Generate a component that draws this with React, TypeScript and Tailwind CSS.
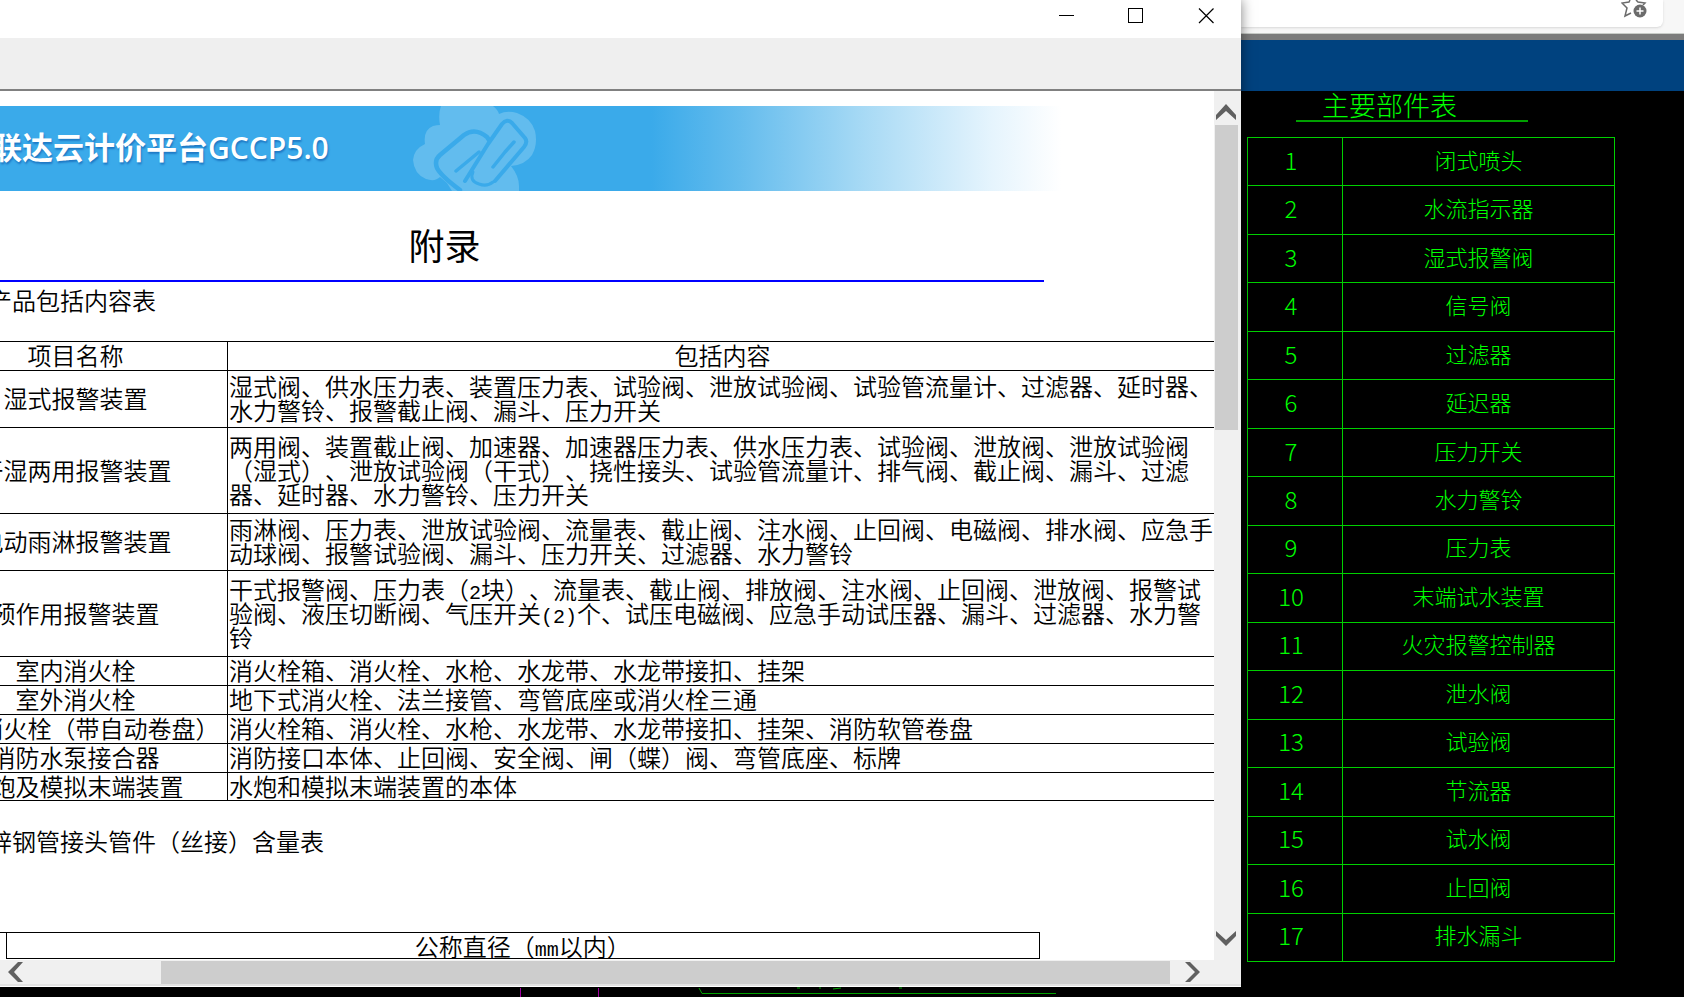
import { ReactNode } from 'react';

const deviceRows = [
  { name: '湿式报警装置', height: 'h-[57px]', lines: ['湿式阀、供水压力表、装置压力表、试验阀、泄放试验阀、试验管流量计、过滤器、延时器、', '水力警铃、报警截止阀、漏斗、压力开关'] },
  { name: '干湿两用报警装置', height: 'h-[86px]', lines: ['两用阀、装置截止阀、加速器、加速器压力表、供水压力表、试验阀、泄放阀、泄放试验阀', '（湿式）、泄放试验阀（干式）、挠性接头、试验管流量计、排气阀、截止阀、漏斗、过滤', '器、延时器、水力警铃、压力开关'] },
  { name: '电动雨淋报警装置', height: 'h-[57px]', lines: ['雨淋阀、压力表、泄放试验阀、流量表、截止阀、注水阀、止回阀、电磁阀、排水阀、应急手', '动球阀、报警试验阀、漏斗、压力开关、过滤器、水力警铃'] },
  { name: '预作用报警装置', height: 'h-[86px]', lines: ['干式报警阀、压力表（2块）、流量表、截止阀、排放阀、注水阀、止回阀、泄放阀、报警试', '验阀、液压切断阀、气压开关(2)个、试压电磁阀、应急手动试压器、漏斗、过滤器、水力警', '铃'] },
  { name: '室内消火栓', height: 'h-[29px]', lines: ['消火栓箱、消火栓、水枪、水龙带、水龙带接扣、挂架'] },
  { name: '室外消火栓', height: 'h-[29px]', lines: ['地下式消火栓、法兰接管、弯管底座或消火栓三通'] },
  { name: '室内消火栓（带自动卷盘）', height: 'h-[29px]', lines: ['消火栓箱、消火栓、水枪、水龙带、水龙带接扣、挂架、消防软管卷盘'] },
  { name: '消防水泵接合器', height: 'h-[29px]', lines: ['消防接口本体、止回阀、安全阀、闸（蝶）阀、弯管底座、标牌'] },
  { name: '水炮及模拟末端装置', height: 'h-[28px]', lines: ['水炮和模拟末端装置的本体'] },
];

const parts = [
  '闭式喷头',
  '水流指示器',
  '湿式报警阀',
  '信号阀',
  '过滤器',
  '延迟器',
  '压力开关',
  '水力警铃',
  '压力表',
  '末端试水装置',
  '火灾报警控制器',
  '泄水阀',
  '试验阀',
  '节流器',
  '试水阀',
  '止回阀',
  '排水漏斗',
];

// latin characters take half the width of a Chinese one
const HalfWidth = ({ text }: { text: string }) => (
  <>
    {text.split(/([()\w]+)/).map((part, i) =>
      i % 2 ? (
        <span key={i} className="font-['Liberation_Mono'] text-xl leading-3">{part}</span>
      ) : (
        part
      )
    )}
  </>
);

const WindowButton = ({ label, children }: { label: string; children: ReactNode }) => (
  <button type="button" aria-label={label} className="w-[70px] h-[31px] flex items-center justify-center">
    <svg width="16" height="16" viewBox="0 0 16 16" fill="none" stroke="black">
      {children}
    </svg>
  </button>
);

const ScrollButton = ({ label, points, className }: { label: string; points: string; className: string }) => (
  <button type="button" aria-label={label} className={`flex items-center justify-center shrink-0 ${className}`}>
    <svg width="20" height="20" viewBox="0 0 20 20" fill="#606060">
      <polygon points={points} />
    </svg>
  </button>
);

const TitleBar = () => (
  <header className="h-[38px] shrink-0 bg-white flex justify-end">
    <WindowButton label="最小化">
      <path d="M1 7.5h15" />
    </WindowButton>
    <WindowButton label="最大化">
      <rect x="0.5" y="0.5" width="14" height="14" />
    </WindowButton>
    <WindowButton label="关闭">
      <path d="M1 0.5l14.5 14.5M15.5 0.5l-14.5 14.5" strokeWidth="1.2" />
    </WindowButton>
  </header>
);

const Banner = () => (
  <div className="mt-[15px] h-[85px] flex items-center bg-[linear-gradient(90deg,#3aaaea_0px,#3aaaea_728px,#64bced_816px,#a8daf5_942px,#e5f4fd_1068px,#ffffff_1138px)]">
    <p className="w-[490px] pl-[37px] pb-[3px] whitespace-nowrap text-[31px] leading-8 font-bold text-white [text-shadow:1px_2px_2px_#1e78c4]">
      广联达云计价平台<span className="font-['Open_Sans'] font-semibold text-[30px]">GCCP5.0</span>
    </p>
    <svg width="124" height="85" viewBox="0 0 124 85">
      <path
        fill="#62bcee"
        d="M28 0H80Q85 4 86 8Q94 4 104 7Q118 12 122 25Q125 38 119 49Q112 59 98 60Q106 70 106 80V85H39L34 77L27 71Q22 76 13 73Q1 68 0 54Q1 43 12 38Q10 24 20 20Q24 19 27 19Q25 8 28 0Z"
      />
      <g fill="none" stroke="#3aaaea" strokeLinecap="round" strokeLinejoin="round">
        <path strokeWidth="4.5" d="M47 84Q28 70 24 62Q21 54 27 49L51 29Q62 21 74 31L76 34" />
        <path strokeWidth="4" d="M52 75L75 38L89 18Q94 12 99 17L112 32Q115 36 111 41L82 75" />
        <path strokeWidth="3" d="M60 66Q56 75 66 78Q74 81 80 76" />
        <path strokeWidth="3.5" d="M43 65L66 46M80 61L92 46L101 36" />
      </g>
    </svg>
  </div>
);

const DeviceTable = () => (
  <table className="mt-[29px] w-[1295px] table-fixed border-collapse">
    <thead>
      <tr className="h-[29px]">
        <th className="w-[304px] p-0 pb-0.5 border border-black font-[350]">项目名称</th>
        <th className="p-0 pb-0.5 border border-black font-[350]">包括内容</th>
      </tr>
    </thead>
    <tbody>
      {deviceRows.map((row) => (
        <tr key={row.name} className={row.height}>
          <td className="p-0 pb-0.5 border border-black text-center whitespace-nowrap">{row.name}</td>
          <td className="p-0 pb-0.5 pl-px border border-black whitespace-pre">
            <HalfWidth text={row.lines.join('\n')} />
          </td>
        </tr>
      ))}
    </tbody>
  </table>
);

const Document = () => (
  <main className="flex-1 min-w-0 overflow-hidden bg-white text-black font-[350] text-2xl leading-6 [text-spacing-trim:space-all]">
    <div className="-ml-[77px] w-[1300px]">
      <Banner />
      <h1 className="mt-[35px] w-[1121px] h-14 pl-[77px] border-b-2 border-[#0000ff] text-center text-4xl leading-9 font-normal">
        <span className="pr-[155px]">附录</span>
      </h1>
      <h2 className="mt-1.5 pl-[65px]">产品包括内容表</h2>
      <DeviceTable />
      <h2 className="mt-7 pl-[41px]">镀锌钢管接头管件（丝接）含量表</h2>
      <table className="mt-[79px] w-[1117px] table-fixed border-collapse">
        <tbody>
          <tr className="h-[26px]">
            <td className="w-[83px] p-0 border-t border-black" />
            <td className="p-0 border border-black text-center">
              <HalfWidth text="公称直径（mm以内）" />
            </td>
          </tr>
        </tbody>
      </table>
    </div>
  </main>
);

const ReportWindow = () => (
  <section className="flex-1 min-h-0 flex flex-col bg-[#f0f0f0] border-b border-white">
    <TitleBar />
    <div className="h-[53px] shrink-0 bg-[#efefef] border-b-2 border-[#808080]" />
    <div className="flex-1 min-h-0 flex pr-0.5">
      <Document />
      <div className="w-[25px] shrink-0 flex flex-col items-center">
        <ScrollButton label="向上滚动" className="h-[34px] w-full pt-2 pr-0.5" points="0,13 10,2 20,13 20,18 10,9 0,18" />
        <div className="w-[23px] h-[305px] bg-[#cdcdcd]" />
        <ScrollButton label="向下滚动" className="mt-auto h-[34px] w-full pb-2.5 pr-0.5" points="0,3 10,12 20,3 20,8 10,18 0,8" />
      </div>
    </div>
    <div className="h-[26px] shrink-0 flex items-center pr-[27px] border-b-2 border-[#e3e3e3]">
      <ScrollButton label="向左滚动" className="w-8" points="12,0 2,10 12,20 17,20 8,10 17,0" />
      <div className="ml-[129px] flex-1 h-[23px] bg-[#cdcdcd]" />
      <ScrollButton label="向右滚动" className="w-11" points="3,0 13,10 3,20 8,20 18,10 8,0" />
    </div>
  </section>
);

const PartsDrawing = () => (
  <section className="flex-1 min-h-0 bg-black text-[#00ff00] font-light text-[22px] leading-[22px] pl-1.5 overflow-hidden">
    <h2 className="ml-[49px] w-[232px] h-[31px] pl-[26px] border-b-2 border-[#00a000] text-[27px] leading-[27px]">主要部件表</h2>
    <table className="mt-[15px] w-[368px] h-[825px] border-collapse">
      <tbody>
        {parts.map((part, i) => (
          <tr key={part}>
            <td className="w-[95px] p-0 pr-2 pb-1 border border-[#00d000] text-center text-2xl">{i + 1}</td>
            <td className="p-0 pb-1.5 border border-[#00d000] text-center">{part}</td>
          </tr>
        ))}
      </tbody>
    </table>
  </section>
);

const BrowserBackground = () => (
  <div className="flex flex-col min-w-0">
    <div className="h-[34px] shrink-0 bg-[#f7f7f7] border-b border-[#c8ccc8] pr-[21px]">
      <div className="h-[27px] bg-white rounded-br-md shadow flex justify-end pr-4">
        <button type="button" aria-label="添加到收藏夹" className="h-[19px]">
          <svg width="26" height="19" viewBox="0 0 26 19" fill="none">
            <path d="M9 0L8 2L1 3L6 8L4 16L10 13M15 0L17 2L24 3L22 5" stroke="#6b6b6b" strokeWidth="1.5" />
            <circle cx="19" cy="11" r="6.5" fill="#6b6b6b" />
            <path d="M19 7.5v7M15.5 11h7" stroke="white" strokeWidth="1.5" />
          </svg>
        </button>
      </div>
    </div>
    <div className="h-1.5 shrink-0 bg-[#7c7c7c]" />
    <div className="h-[51px] shrink-0 bg-[#00427f]" />
    <PartsDrawing />
  </div>
);

const App = () => {
  return (
    <div className="h-screen overflow-hidden bg-black grid grid-cols-[minmax(0,1241fr)_minmax(0,443fr)] font-['Noto_Sans_CJK_SC',sans-serif]">
      <div className="z-10 min-w-0 min-h-0 flex flex-col shadow-[0_0_12px_rgba(0,0,0,0.5)]">
        <ReportWindow />
        <div className="h-2.5 shrink-0 bg-black">
          <svg className="w-full h-2.5" viewBox="0 0 1241 10" preserveAspectRatio="xMinYMin">
            <path d="M520.5 1v9M598.5 1v9" stroke="#a000a0" />
            <path d="M699 1l3 5.5h354M797 1h3M819 1h2M833 2l8-1M899 1h3" stroke="#00a000" fill="none" />
          </svg>
        </div>
      </div>
      <BrowserBackground />
    </div>
  );
};

export default App;
